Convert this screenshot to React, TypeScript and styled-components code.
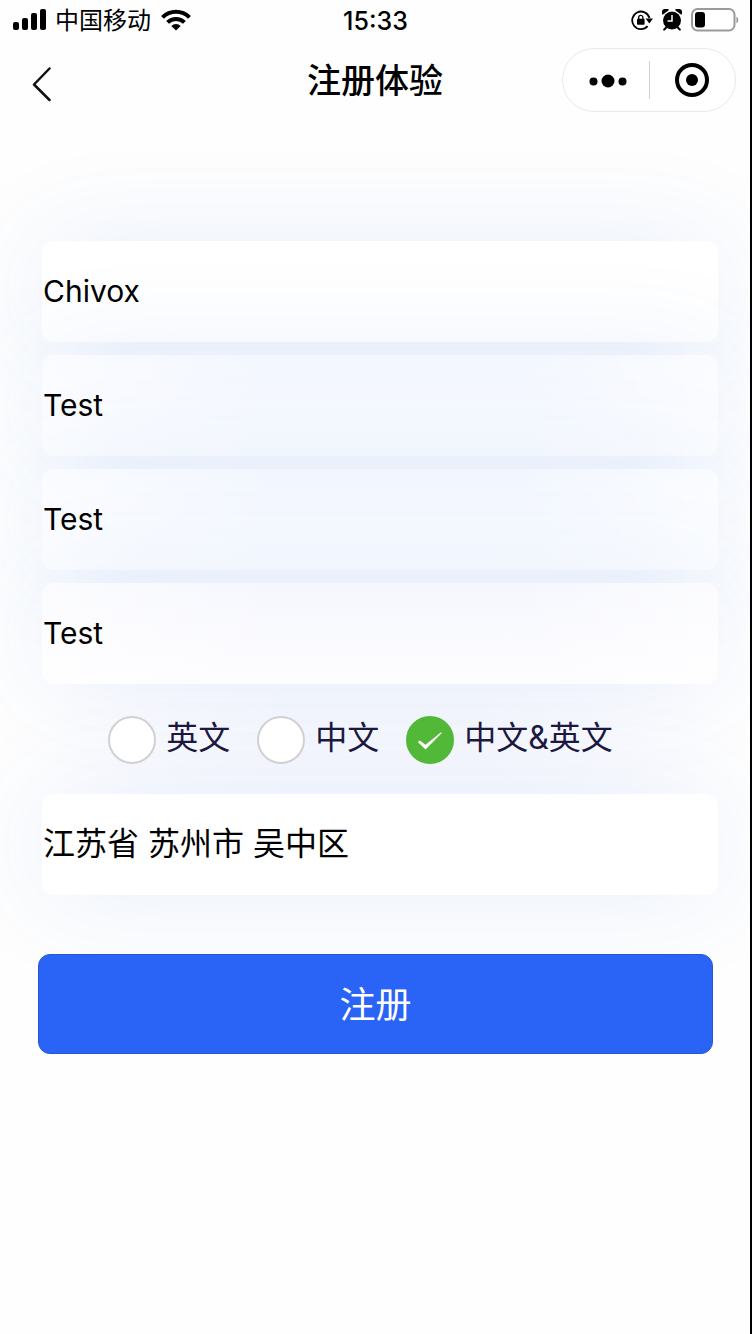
import React, { useState } from "react";
import styled, { createGlobalStyle } from "styled-components";

const GlobalStyle = createGlobalStyle`
  *, *::before, *::after { box-sizing: border-box; }
  body {
    margin: 0;
    background: #fefefe;
    color: #000;
    font-family: Inter, "Noto Sans CJK SC", sans-serif;
  }
  button, input { font: inherit; color: inherit; }
`;

const Page = styled.div`
  display: flex;
  flex-direction: column;
  min-height: 100vh;
  border-right: 2px solid #000;
  overflow: hidden;
`;

const StatusBar = styled.header`
  display: grid;
  grid-template-columns: 1fr auto 1fr;
  align-items: center;
  height: 40px;
  padding: 0 11px 0 12px;
  font-size: 24px;
  line-height: 32px;
`;

const StatusGroup = styled.div<{ $end?: boolean }>`
  display: flex;
  align-items: center;
  justify-content: ${(p) => (p.$end ? "flex-end" : "flex-start")};
  gap: 9px;
`;

const Carrier = styled.span`
  padding-top: 2px;
`;

const Clock = styled.time`
  padding-top: 2px;
  font-size: 25px;
  font-weight: 500;
`;

const NavBar = styled.nav`
  display: grid;
  grid-template-columns: 1fr auto 1fr;
  align-items: center;
  height: 80px;
  padding: 0 14px;
`;

const BackButton = styled.button`
  display: flex;
  justify-self: start;
  padding: 16px 10px 8px 17px;
  border: 0;
  background: none;
`;

const Title = styled.h1`
  margin: 0;
  padding-top: 2px;
  font-size: 34px;
  line-height: 48px;
  font-weight: 500;
`;

const Capsule = styled.div`
  display: grid;
  grid-template-columns: 1fr 1fr;
  align-items: center;
  justify-self: end;
  width: 174px;
  height: 64px;
  border: 1px solid #e9e9e9;
  border-radius: 32px;
  background: #fff;
`;

const CapsuleButton = styled.button`
  display: flex;
  align-items: center;
  justify-content: center;
  height: 100%;
  padding: 0;
  border: 0;
  background: none;

  &:first-child {
    padding: 2px 0 0 3px;
  }
  & + &::before {
    content: "";
    width: 1px;
    height: 38px;
    margin-right: 25px;
    background: #d0d0d0;
  }
  & + & {
    justify-content: flex-start;
  }
`;

const Form = styled.form`
  display: flex;
  flex-direction: column;
  padding-top: 121px;
`;

const Field = styled.input<{ $from?: string; $to?: string }>`
  height: 101px;
  margin: 0 32px 13px 42px;
  padding: 0 1px 2px;
  border: 0;
  border-radius: 12px;
  outline: 0;
  background:
    linear-gradient(
      90deg,
      rgba(255, 255, 255, 0.6),
      rgba(255, 255, 255, 0) 35%,
      rgba(255, 255, 255, 0) 70%,
      rgba(255, 255, 255, 0.6)
    ),
    linear-gradient(${(p) => p.$from ?? "#fff"}, ${(p) => p.$to ?? "#fff"});
  box-shadow: 0 0 105px rgba(40, 110, 225, 0.1);
  font-size: 30px;
`;

const RegionField = styled(Field)`
  margin-bottom: 59px;
  padding-bottom: 8px;
  font-size: 32px;
`;

const Languages = styled.fieldset`
  position: relative;
  display: flex;
  justify-content: center;
  height: 110px;
  margin: -13px 32px 0 42px;
  padding: 32px 12px 0 0;
  border: 0;
  background: linear-gradient(
    90deg,
    rgba(75, 95, 245, 0),
    rgba(75, 95, 245, 0.03) 35%,
    rgba(75, 95, 245, 0.03) 65%,
    rgba(75, 95, 245, 0)
  );
`;

const Language = styled.label`
  display: flex;
  gap: 10px;
  margin-right: 27px;
  color: #1c1840;
  font-size: 32px;
  line-height: 44px;
  white-space: nowrap;
`;

const RadioMark = styled.span`
  display: grid;
  width: 48px;
  height: 48px;
`;

const Radio = styled.input`
  grid-area: 1 / 1;
  width: 48px;
  height: 48px;
  margin: 0;
  appearance: none;
  border: 2px solid #d1d1d1;
  border-radius: 50%;
  background: #fff;

  &:checked {
    border-color: #52b838;
    background: #52b838;
  }
`;

const Tick = styled.svg`
  grid-area: 1 / 1;
  z-index: 1;
  pointer-events: none;
`;

const Submit = styled.button`
  height: 100px;
  margin: 0 37px 0 38px;
  padding: 0 0 5px;
  border: 1px solid #2a58cc;
  border-radius: 12px;
  background: #2a64f6;
  color: #fff;
  font-size: 36px;
  z-index: 1;
`;

const SignalIcon = () => (
  <svg width="34" height="22" viewBox="-1 0 34 22" aria-hidden="true">
    <rect x="0" y="13" width="6" height="8" rx="2" />
    <rect x="9" y="9" width="6" height="12" rx="2" />
    <rect x="18" y="4" width="6" height="17" rx="2" />
    <rect x="27" y="0" width="6" height="21" rx="2" />
  </svg>
);

const WifiIcon = () => (
  <svg width="32" height="22" viewBox="-1 0 32 22" aria-hidden="true">
    <g fill="none" stroke="#000" strokeWidth="4">
      <path d="M1.5 8.3a19 19 0 0 1 27 0" />
      <path d="M6.6 13.4a12 12 0 0 1 16.8 0" />
    </g>
    <path d="M15 21.5l-4.7-4.6a6.8 6.8 0 0 1 9.4 0z" />
  </svg>
);

const RotationLockIcon = () => (
  <svg width="22" height="22" viewBox="0 0 22 22" aria-hidden="true">
    <path d="M16.6 17.2A8.8 8.8 0 1 1 18.5 9" fill="none" stroke="#000" strokeWidth="1.8" />
    <path d="M14.6 9.5h7.4l-3.7 5z" />
    <rect x="6" y="9.8" width="7.6" height="6" rx="0.8" />
    <path d="M7.7 10.5V8.4a2.1 2.1 0 0 1 4.2 0v2.1" fill="none" stroke="#000" strokeWidth="1.3" />
  </svg>
);

const AlarmIcon = () => (
  <svg width="20" height="22" viewBox="0 0 20 22" aria-hidden="true">
    <circle cx="10" cy="11.5" r="9" />
    <path d="M0.8 5.8A3.9 3.9 0 0 1 7 1zM19.2 5.8A3.9 3.9 0 0 0 13 1z" />
    <path d="M4.2 18.5l-2 2.2M15.8 18.5l2 2.2" stroke="#000" strokeWidth="2" strokeLinecap="round" />
    <path d="M10 6v6H5.5" fill="none" stroke="#fff" strokeWidth="1.5" />
  </svg>
);

const BatteryIcon = () => (
  <svg width="48" height="24" viewBox="0 0 48 24" aria-hidden="true">
    <rect x="1" y="1" width="42.5" height="21.5" rx="5.5" fill="#fff" stroke="#9a9a9a" strokeWidth="2" />
    <rect x="4" y="4" width="10" height="15.5" rx="3" />
    <path d="M45.5 8.5a4.5 4.5 0 0 1 0 7z" fill="#8c8c8c" />
  </svg>
);

const languages = ["英文", "中文", "中文&英文"];

export default function App() {
  const [language, setLanguage] = useState(languages[2]);

  return (
    <Page>
      <GlobalStyle />
      <StatusBar>
        <StatusGroup>
          <SignalIcon />
          <Carrier>中国移动</Carrier>
          <WifiIcon />
        </StatusGroup>
        <Clock>15:33</Clock>
        <StatusGroup $end>
          <RotationLockIcon />
          <AlarmIcon />
          <BatteryIcon />
        </StatusGroup>
      </StatusBar>
      <NavBar>
        <BackButton type="button" aria-label="返回">
          <svg
            width="20"
            height="36"
            viewBox="0 0 20 36"
            fill="none"
            stroke="#111"
            strokeWidth="2.5"
            strokeLinecap="round"
            strokeLinejoin="round"
          >
            <path d="M18.5 2.5L3 18.500l15.5 15.5" />
          </svg>
        </BackButton>
        <Title>注册体验</Title>
        <Capsule>
          <CapsuleButton type="button" aria-label="更多">
            <svg width="38" height="14" viewBox="0 0 38 14">
              <circle cx="4.5" cy="7.5" r="4" />
              <circle cx="19" cy="7" r="6.5" />
              <circle cx="33.5" cy="7.5" r="4" />
            </svg>
          </CapsuleButton>
          <CapsuleButton type="button" aria-label="关闭">
            <svg width="34" height="34" viewBox="0 0 34 34">
              <circle cx="17" cy="17" r="15" fill="none" stroke="#000" strokeWidth="4" />
              <circle cx="17" cy="17" r="6" />
            </svg>
          </CapsuleButton>
        </Capsule>
      </NavBar>
      <Form onSubmit={(e) => e.preventDefault()}>
        <Field aria-label="姓名" defaultValue="Chivox" />
        <Field aria-label="公司" defaultValue="Test" $from="#f2f6ff" $to="#fafcff" />
        <Field aria-label="职位" defaultValue="Test" $from="#f1f6ff" $to="#fafcff" />
        <Field aria-label="备注" defaultValue="Test" $from="#f6f7fe" $to="#fdfdff" />
        <Languages aria-label="语言">
          {languages.map((name) => (
            <Language key={name}>
              <RadioMark>
                <Radio
                  type="radio"
                  name="language"
                  checked={language === name}
                  onChange={() => setLanguage(name)}
                />
                {language === name && (
                  <Tick width="48" height="48" viewBox="0 0 48 48" aria-hidden="true">
                    <path d="M11.8 26l2-1.5 5.7 4.2L35 16.2l0.8 0.9L19.5 33.5z" fill="#fff" />
                  </Tick>
                )}
              </RadioMark>
              {name}
            </Language>
          ))}
        </Languages>
        <RegionField aria-label="地区" defaultValue="江苏省 苏州市 吴中区" />
        <Submit type="submit">注册</Submit>
      </Form>
    </Page>
  );
}
